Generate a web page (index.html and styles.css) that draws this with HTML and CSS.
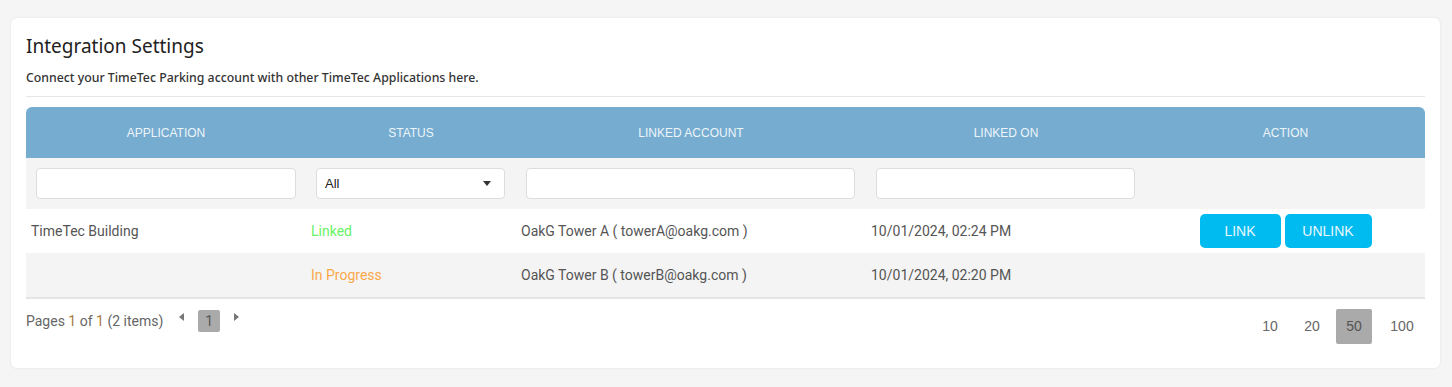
FILE: index.html
```html
<!DOCTYPE html>
<html lang="en">
<head>
<meta charset="UTF-8" />
<meta name="viewport" content="width=device-width, initial-scale=1.0">
<title>Integration Settings</title>
<link rel="stylesheet" href="styles.css">
</head>
<body>

<div class="card">
  <h1>Integration Settings</h1>
  <p class="intro">Connect your TimeTec Parking account with other TimeTec Applications here.</p>
  <hr>

  <table class="grid">
    <colgroup>
      <col style="width:280px">
      <col style="width:210px">
      <col style="width:350px">
      <col style="width:280px">
      <col>
    </colgroup>
    <thead>
      <tr class="head">
        <th>APPLICATION</th>
        <th>STATUS</th>
        <th>LINKED ACCOUNT</th>
        <th>LINKED ON</th>
        <th>ACTION</th>
      </tr>
      <tr class="filters">
        <td><input type="text" class="w-app"></td>
        <td>
          <div class="select">
            <span>All</span>
            <svg width="8" height="5" viewBox="0 0 8 5"><path d="M0 0h8L4 5z" fill="#333"/></svg>
          </div>
        </td>
        <td><input type="text" class="w-acc"></td>
        <td><input type="text" class="w-on"></td>
        <td></td>
      </tr>
    </thead>
    <tbody>
      <tr>
        <td>TimeTec Building</td>
        <td class="linked">Linked</td>
        <td>OakG Tower A ( towerA@oakg.com )</td>
        <td>10/01/2024, 02:24 PM</td>
        <td class="actions">
          <button class="btn btn-link">LINK</button><button class="btn btn-unlink">UNLINK</button>
        </td>
      </tr>
      <tr class="alt">
        <td></td>
        <td class="progress">In Progress</td>
        <td>OakG Tower B ( towerB@oakg.com )</td>
        <td>10/01/2024, 02:20 PM</td>
        <td></td>
      </tr>
    </tbody>
  </table>

  <div class="pager">
    <div class="pager-left">
      <span class="info">Pages <em>1</em> of <em>1</em> (2 items)</span>
      <svg class="arrow" width="5" height="8" viewBox="0 0 5 8"><path d="M5 0v8L0 4z" fill="#777"/></svg>
      <span class="page current">1</span>
      <svg class="arrow" width="5" height="8" viewBox="0 0 5 8"><path d="M0 0v8l5-4z" fill="#777"/></svg>
    </div>
    <div class="sizes">
      <span>10</span>
      <span>20</span>
      <span class="current">50</span>
      <span class="last">100</span>
    </div>
  </div>
</div>

</body>
</html>
```

FILE: styles.css
```css
body {
  margin: 0;
  padding: 18px 12px 19px 11px;
  background: #f5f5f5;
  font-family: "Noto Sans", sans-serif;
  color: #555;
}
.card {
  background: #fff;
  border-radius: 6px;
  box-shadow: 0 0 3px rgba(0,0,0,0.08);
  padding: 14px 15px 17px 15px;
  box-sizing: border-box;
  height: 350px;
}
h1 {
  margin: 0;
  font-size: 19px;
  font-weight: 400;
  color: #222;
  line-height: 28px;
}
.intro {
  margin: 10px 0 0;
  font-size: 12.3px;
  font-weight: 500;
  color: #333;
  line-height: 16px;
}
hr {
  border: 0;
  border-top: 1px solid #e6e6e6;
  margin: 10px 0 10px;
}
.grid {
  width: 100%;
  border-collapse: collapse;
  table-layout: fixed;
  font-family: "Liberation Sans", Arial, sans-serif;
}
.head th {
  background: #75acd0;
  color: #eef5fa;
  font-weight: 400;
  font-size: 12px;
  height: 51px;
  padding: 0;
  text-align: center;
}
.head th:first-child { border-top-left-radius: 6px; }
.head th:last-child { border-top-right-radius: 6px; }
.filters td {
  background: #f4f4f4;
  height: 51px;
  padding: 0 10px;
}
.filters input,
.select {
  display: block;
  box-sizing: border-box;
  height: 31px;
  border: 1px solid #ddd;
  border-radius: 4px;
  background: #fff;
  margin: 0;
}
.w-app { width: 260px; }
.w-acc { width: 329px; }
.w-on { width: 259px; }
.select {
  width: 189px;
  display: flex;
  align-items: center;
  justify-content: space-between;
  padding: 0 13px 0 8px;
  font-size: 13px;
  color: #222;
}
tbody td {
  height: 44px;
  padding: 0 5px;
  font-size: 14px;
  color: #555;
  font-family: Roboto, sans-serif;
}
tbody tr.alt td {
  background: #f4f4f4;
  border-bottom: 2px solid #e4e4e4;
}
.linked { color: #66f266 !important; }
.progress { color: #f8a94a !important; }
.actions { text-align: center; }
.btn {
  font-family: "Liberation Sans", Arial, sans-serif;
  background: #00bbf0;
  color: #eaf8fe;
  border: none;
  border-radius: 5px;
  height: 34px;
  font-size: 14px;
  cursor: pointer;
  margin: 0 2px;
  vertical-align: middle;
}
.btn-link { width: 81px; }
.btn-unlink { width: 87px; }
.pager {
  display: flex;
  justify-content: space-between;
  align-items: flex-start;
  margin-top: 10px;
  font-size: 14px;
  color: #666;
  font-family: Roboto, sans-serif;
}
.pager-left {
  display: flex;
  align-items: center;
  height: 24px;
}
.info em {
  font-style: normal;
  color: #a77a3d;
}
.arrow { margin: 0 0 8px 0; }
.pager-left .arrow:first-of-type { margin-left: 16px; }
.page {
  display: inline-block;
  width: 22px;
  height: 22px;
  line-height: 22px;
  text-align: center;
  border-radius: 2px;
  margin: 0 14px;
}
.current {
  background: #aaa;
  color: #555;
}
.sizes {
  display: flex;
  margin-right: 5px;
}
.sizes span {
  display: inline-block;
  min-width: 36px;
  height: 35px;
  line-height: 35px;
  text-align: center;
  margin-left: 6px;
  border-radius: 2px;
  font-family: "Liberation Sans", Arial, sans-serif;
}
.sizes .last { margin-left: 12px; }
```
